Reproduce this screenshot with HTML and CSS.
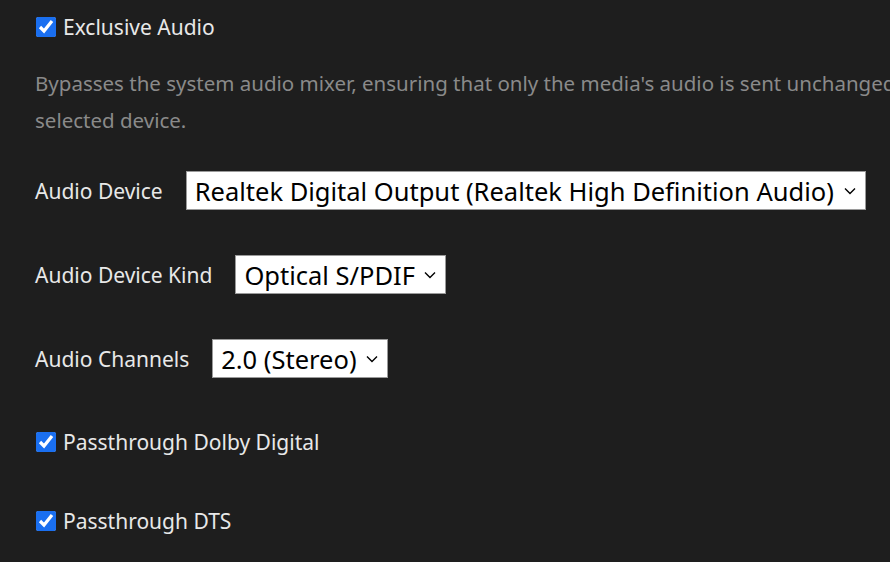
FILE: index.html
```html
<!DOCTYPE html>
<html lang="en">
  <head>
    <meta charset="UTF-8" />
    <meta name="viewport" content="width=device-width, initial-scale=1.0" />
    <title>Audio settings</title>
    <link rel="stylesheet" href="styles.css">
  </head>
  <body>
    <div class="settings">
      <label class="check-row">
        <input type="checkbox" checked />
        <span>Exclusive Audio</span>
      </label>
      <p class="desc">
        Bypasses the system audio mixer, ensuring that only the media's audio is sent unchanged to the
        selected device.
      </p>

      <div class="field field-device">
        <span class="field-label">Audio Device</span>
        <div class="select-wrap">
          <select>
            <option>Realtek Digital Output (Realtek High Definition Audio)</option>
          </select>
          <svg class="chevron" viewBox="0 0 12 8"><path d="M1 1.5 6 6.5 11 1.5" /></svg>
        </div>
      </div>

      <div class="field">
        <span class="field-label">Audio Device Kind</span>
        <div class="select-wrap">
          <select>
            <option>Optical S/PDIF</option>
          </select>
          <svg class="chevron" viewBox="0 0 12 8"><path d="M1 1.5 6 6.5 11 1.5" /></svg>
        </div>
      </div>

      <div class="field field-channels">
        <span class="field-label">Audio Channels</span>
        <div class="select-wrap">
          <select>
            <option>2.0 (Stereo)</option>
          </select>
          <svg class="chevron" viewBox="0 0 12 8"><path d="M1 1.5 6 6.5 11 1.5" /></svg>
        </div>
      </div>

      <label class="check-row check-dolby">
        <input type="checkbox" checked />
        <span>Passthrough Dolby Digital</span>
      </label>

      <label class="check-row check-dts">
        <input type="checkbox" checked />
        <span>Passthrough DTS</span>
      </label>
    </div>
  </body>
</html>
```

FILE: styles.css
```css
html,
body,
p,
div {
  margin: 0;
  padding: 0;
}

html {
  overflow: hidden;
}

body {
  background-color: #1e1e1e;
  color: #e8e8e8;
  font-family: "Noto Sans", "Open Sans", sans-serif;
  font-size: 21px;
}

.settings {
  width: 1000px;
  padding: 14px 0 0 35px;
}

.check-row {
  display: flex;
  align-items: center;
  gap: 7px;
  height: 26px;
}

.check-row input {
  width: 20px;
  height: 20px;
  margin: 0 0 0 1px;
  accent-color: #1a6ff0;
}

.desc {
  margin-top: 25px;
  width: 950px;
  color: #8a8a8a;
  font-size: 20.5px;
  line-height: 37px;
}

.field {
  display: flex;
  align-items: center;
  gap: 23px;
  margin-top: 45px;
}

.field-device {
  margin-top: 32px;
}

.field-channels {
  margin-top: 45px;
}

.select-wrap {
  position: relative;
}

.select-wrap select {
  appearance: none;
  display: block;
  height: 39px;
  padding: 0 30px 0 8px;
  border: 1px solid #9a9a9a;
  border-radius: 0;
  background-color: #fff;
  color: #000;
  font-family: "Noto Sans", "Open Sans", sans-serif;
  font-size: 25.5px;
}

.chevron {
  position: absolute;
  right: 10px;
  top: 16px;
  width: 12px;
  height: 8px;
  fill: none;
  stroke: #000;
  stroke-width: 1.4;
  pointer-events: none;
}

.check-dolby {
  margin-top: 51px;
}

.check-dts {
  margin-top: 53px;
}
```
